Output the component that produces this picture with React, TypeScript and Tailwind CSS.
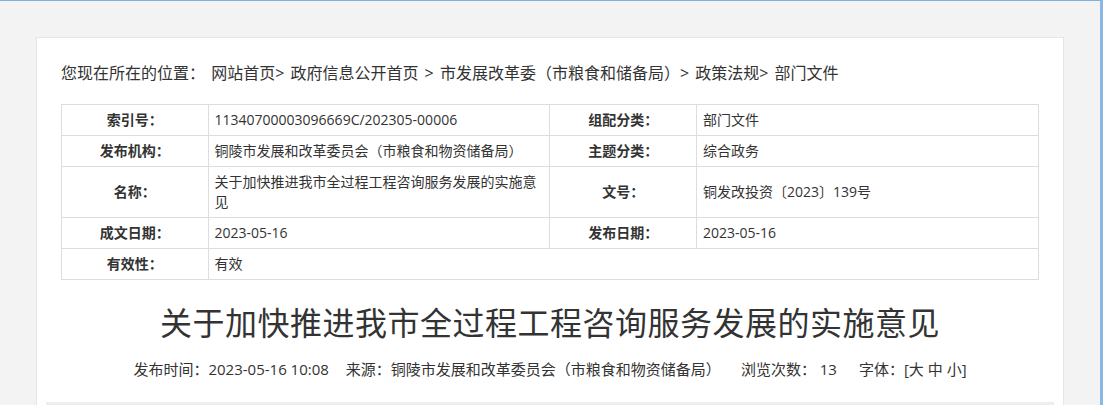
const FONT = '"Open Sans", "Noto Sans CJK SC", sans-serif'

type Row = {
  label: string
  value: string
  label2?: string
  value2?: string
}

const ROWS: Row[] = [
  { label: '索引号：', value: '11340700003096669C/202305-00006', label2: '组配分类：', value2: '部门文件' },
  { label: '发布机构：', value: '铜陵市发展和改革委员会（市粮食和物资储备局）', label2: '主题分类：', value2: '综合政务' },
  { label: '名称：', value: '关于加快推进我市全过程工程咨询服务发展的实施意见', label2: '文号：', value2: '铜发改投资〔2023〕139号' },
  { label: '成文日期：', value: '2023-05-16', label2: '发布日期：', value2: '2023-05-16' },
  { label: '有效性：', value: '有效' },
]

function InfoTable() {
  return (
    <table className="w-full table-fixed border-collapse text-[14px] leading-[20px] text-[#333]">
      <colgroup>
        <col className="w-[15%]" />
        <col className="w-[35%]" />
        <col className="w-[15%]" />
        <col className="w-[35%]" />
      </colgroup>
      <tbody>
        {ROWS.map((row) => (
          <tr key={row.label}>
            <td className="border border-[#dddddd] py-[5px] text-center font-bold">{row.label}</td>
            <td className="border border-[#dddddd] px-[6px] py-[5px]" colSpan={row.label2 ? 1 : 3}>
              {row.value}
            </td>
            {row.label2 && (
              <>
                <td className="border border-[#dddddd] py-[5px] text-center font-bold">{row.label2}</td>
                <td className="border border-[#dddddd] px-[6px] py-[5px]">{row.value2}</td>
              </>
            )}
          </tr>
        ))}
      </tbody>
    </table>
  )
}

export default function App() {
  return (
    <div
      className="min-h-[405px] h-[405px] overflow-hidden border-t border-r-[3px] border-t-[#7fb0de] border-r-[#8ab8e2] bg-[#f3f3f3] pt-[36px] pl-[36px] pr-[36px]"
      style={{ fontFamily: FONT }}
    >
      <div className="border border-[#e6e6e6] bg-white px-[24px] pt-[23px]">
        <div className="text-[16px] leading-[24px] text-[#333] [word-spacing:2px]">
          您现在所在的位置：&nbsp;网站首页&gt;&nbsp;政府信息公开首页&nbsp;&gt;&nbsp;市发展改革委（市粮食和储备局）&gt;&nbsp;政策法规&gt;&nbsp;部门文件
        </div>

        <div className="mt-[19px]">
          <InfoTable />
        </div>

        <h1 className="mt-[21px] text-center text-[32px] leading-[44px] tracking-[0.5px] font-normal text-[#333]">
          关于加快推进我市全过程工程咨询服务发展的实施意见
        </h1>

        <div className="mt-[12px] text-center text-[15px] leading-[24px] text-[#333]">
          <span>发布时间：2023-05-16 10:08</span>
          <span className="ml-[17px]">来源：铜陵市发展和改革委员会（市粮食和物资储备局）</span>
          <span className="ml-[20px]">浏览次数： 13</span>
          <span className="ml-[22px]">字体：[大 中 小]</span>
        </div>

        <div className="mx-[-15px] mt-[21px] border-t-[3px] border-[#eeeeee]" />
      </div>
    </div>
  )
}
